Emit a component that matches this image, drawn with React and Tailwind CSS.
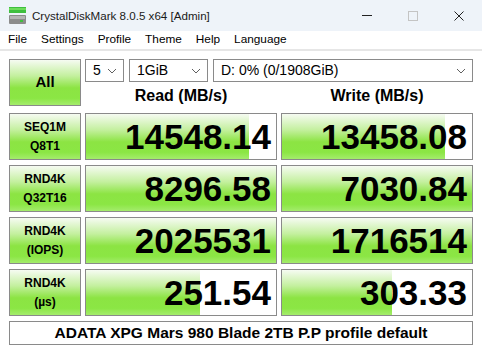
import React from "react";

const rows = [
  { l1: "SEQ1M", l2: "Q8T1", read: "14548.14", rp: 86, write: "13458.08", wp: 86 },
  { l1: "RND4K", l2: "Q32T16", read: "8296.58", rp: 100, write: "7030.84", wp: 100 },
  { l1: "RND4K", l2: "(IOPS)", read: "2025531", rp: 100, write: "1716514", wp: 100 },
  { l1: "RND4K", l2: "(\u00b5s)", read: "251.54", rp: 60, write: "303.33", wp: 58 },
];

const green =
  "bg-[linear-gradient(to_bottom,#f6fbf2_0%,#c4f09f_35%,#8ce443_62%,#8be644_85%,#a4ec6c_100%)]";

function Chevron() {
  return (
    <svg width="10" height="6" viewBox="0 0 10 6" className="shrink-0">
      <polyline points="1,1 5,5 9,1" fill="none" stroke="#606060" strokeWidth="1" />
    </svg>
  );
}

function Select({ w, children }) {
  return (
    <div
      className={`${w} h-[23px] flex items-center justify-between pl-[7px] pr-[6px] border border-[#8a8a8a] bg-white text-[14px] text-black`}
    >
      <span>{children}</span>
      <Chevron />
    </div>
  );
}

function ValueBox({ value, pct }) {
  return (
    <div className="relative h-[47px] border border-[#8a8a8a] bg-white overflow-hidden">
      <div className={`absolute left-0 top-0 bottom-0 ${green}`} style={{ width: pct + "%" }} />
      <div className="relative h-full flex items-center justify-end pr-[5px] text-[35px] font-bold leading-none text-black">
        {value}
      </div>
    </div>
  );
}

export default function App() {
  return (
    <div className="w-[482px] h-[352px] overflow-hidden bg-white font-['Liberation_Sans',Arial,sans-serif] text-black">
      {/* title bar */}
      <div className="h-[31px] bg-[#eef3f9] flex items-center">
        <svg width="17" height="17" viewBox="0 0 17 17" className="ml-[9px]">
          <rect x="0" y="0" width="17" height="6" fill="#3fbf3f" />
          <rect x="0" y="1" width="17" height="2" fill="#6ddc5a" />
          <rect x="0" y="8" width="17" height="9" rx="1" fill="#8c8c8c" />
          <rect x="1" y="9" width="15" height="3" fill="#b4b4b4" />
          <rect x="11" y="13" width="3" height="2" fill="#3fbf3f" />
        </svg>
        <span className="ml-[6px] text-[11.6px] text-[#1a1a1a]">CrystalDiskMark 8.0.5 x64 [Admin]</span>
        <div className="ml-auto flex items-center">
          <div className="w-[46px] flex justify-center">
            <div className="w-[10px] h-px bg-[#222]" />
          </div>
          <div className="w-[46px] flex justify-center">
            <div className="w-[10px] h-[10px] border border-[#c4c4c4]" />
          </div>
          <div className="w-[46px] flex justify-center">
            <svg width="10" height="10" viewBox="0 0 10 10">
              <path d="M0.5 0.5 L9.5 9.5 M9.5 0.5 L0.5 9.5" stroke="#222" strokeWidth="1" />
            </svg>
          </div>
        </div>
      </div>

      {/* menu */}
      <div className="h-[18px] flex items-center gap-[14px] pl-[8px] text-[11.8px] text-black border-b-2 border-[#e6e6e6] box-content">
        <span>File</span>
        <span>Settings</span>
        <span>Profile</span>
        <span>Theme</span>
        <span>Help</span>
        <span>Language</span>
      </div>

      {/* main */}
      <div className="px-[9px] pt-[8px] grid grid-cols-[72px_192px_192px] gap-x-[4px] gap-y-[5px]">
        <div
          className={`h-[47px] border border-[#8a8a8a] ${green} flex items-center justify-center text-[15px] font-bold`}
        >
          All
        </div>
        <div className="col-span-2 flex flex-col">
          <div className="flex gap-[5px]">
            <Select w="w-[39px]">5</Select>
            <Select w="w-[79px]">1GiB</Select>
            <Select w="flex-1">D: 0% (0/1908GiB)</Select>
          </div>
          <div className="flex-1 grid grid-cols-2 gap-x-[4px] items-center pt-[2px] text-[16px] font-bold text-center">
            <span>Read (MB/s)</span>
            <span>Write (MB/s)</span>
          </div>
        </div>

        {rows.map((r, i) => (
          <React.Fragment key={i}>
            <div
              className={`h-[47px] border border-[#8a8a8a] ${green} flex flex-col items-center justify-center text-[12px] font-bold leading-[19px]`}
            >
              <span>{r.l1}</span>
              <span>{r.l2}</span>
            </div>
            <ValueBox value={r.read} pct={r.rp} />
            <ValueBox value={r.write} pct={r.wp} />
          </React.Fragment>
        ))}

        <div className="col-span-3 h-[24px] border border-[#8a8a8a] bg-white flex items-center justify-center text-[15.5px] font-bold">
          ADATA XPG Mars 980 Blade 2TB P.P profile default
        </div>
      </div>
    </div>
  );
}
